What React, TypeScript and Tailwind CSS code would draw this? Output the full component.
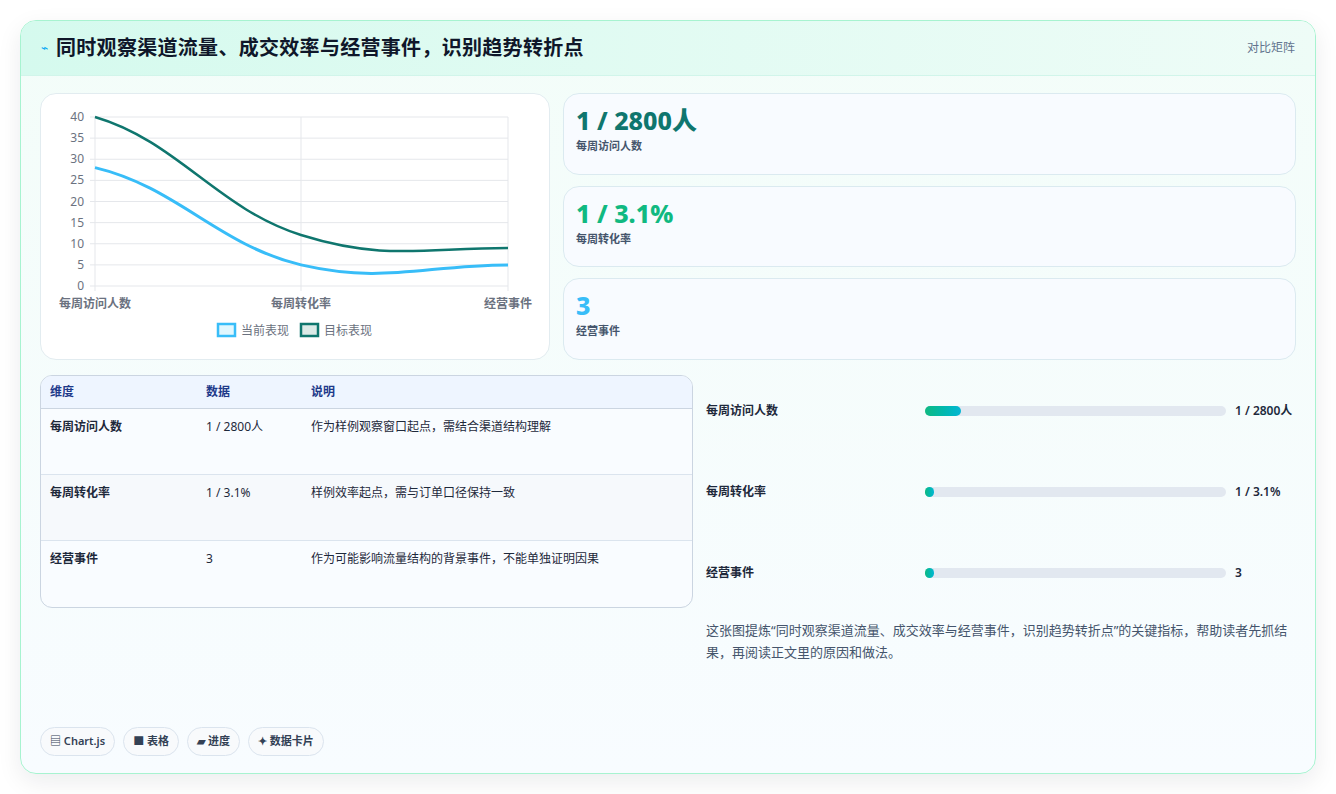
const FONT = { fontFamily: '"Noto Sans", "Noto Sans CJK SC", sans-serif' };

const stats = [
  { value: "1 / 2800人", label: "每周访问人数", color: "text-[#0f766e]" },
  { value: "1 / 3.1%", label: "每周转化率", color: "text-[#10b981]" },
  { value: "3", label: "经营事件", color: "text-[#38bdf8]" },
];

const rows = [
  { dim: "每周访问人数", data: "1 / 2800人", note: "作为样例观察窗口起点，需结合渠道结构理解" },
  { dim: "每周转化率", data: "1 / 3.1%", note: "样例效率起点，需与订单口径保持一致" },
  { dim: "经营事件", data: "3", note: "作为可能影响流量结构的背景事件，不能单独证明因果" },
];

const bars = [
  { label: "每周访问人数", value: "1 / 2800人", pct: 12 },
  { label: "每周转化率", value: "1 / 3.1%", pct: 2 },
  { label: "经营事件", value: "3", pct: 2 },
];

function Chart() {
  const ys = [0, 5, 10, 15, 20, 25, 30, 35, 40];
  return (
    <svg width="509" height="266" viewBox="41 93 509 266" className="block">
      {ys.map((v) => (
        <g key={v}>
          <line x1="90" x2="508" y1={285 - v * 4.225} y2={285 - v * 4.225} stroke="#e5e7eb" />
          <text x="84" y={289 - v * 4.225} textAnchor="end" fontSize="12" fill="#6b7280">{v}</text>
        </g>
      ))}
      {[95, 301, 508].map((x) => (
        <line key={x} x1={x} x2={x} y1="116" y2="290" stroke="#e5e7eb" />
      ))}
      <path d="M95,166.6 C177,186 218,244 301,263.9 C384,283 425,264 508,263.9" fill="none" stroke="#38bdf8" strokeWidth="3" />
      <path d="M95,116 C177,140 218,208 301,234 C384,260 425,247 508,247" fill="none" stroke="#0f766e" strokeWidth="2.5" />
      <g fontSize="12" fill="#6b7280" fontWeight="600">
        <text x="95" y="307" textAnchor="middle">每周访问人数</text>
        <text x="301" y="307" textAnchor="middle">每周转化率</text>
        <text x="508" y="307" textAnchor="middle">经营事件</text>
      </g>
      <rect x="218" y="323" width="17" height="12" fill="#e0f7fe" stroke="#38bdf8" strokeWidth="2.5" />
      <text x="241" y="334" fontSize="12" fill="#6b7280">当前表现</text>
      <rect x="301" y="323" width="17" height="12" fill="#dbeae7" stroke="#0f766e" strokeWidth="2.5" />
      <text x="324" y="334" fontSize="12" fill="#6b7280">目标表现</text>
    </svg>
  );
}

export default function App() {
  return (
    <div style={FONT} className="w-[1336px] h-[794px] bg-white pt-5 px-5">
      <div className="h-[754px] rounded-2xl border border-[#a7f3d0] bg-gradient-to-b from-[#f3fdf9] to-[#f8fcff] shadow-[0_8px_24px_rgba(15,23,42,0.08)] overflow-hidden flex flex-col">
        {/* Header */}
        <div className="h-[55px] shrink-0 flex items-center justify-between px-5 bg-gradient-to-r from-[#d5faee] to-[#eefcf7] border-b border-[#d1f5ea]">
          <div className="flex items-center gap-2">
            <span className="text-sky-500 text-xs">⌁</span>
            <h1 className="text-[20px] font-bold tracking-[0.3px] text-[#0f172a]">同时观察渠道流量、成交效率与经营事件，识别趋势转折点</h1>
          </div>
          <span className="text-xs text-slate-500">对比矩阵</span>
        </div>

        <div className="flex-1 px-[19px] pt-[17px] pb-[17px] flex flex-col">
          {/* Top row */}
          <div className="flex gap-[13px] h-[267px]">
            <div className="w-[510px] rounded-2xl border border-[#e2ecf0] bg-white overflow-hidden">
              <Chart />
            </div>
            <div className="flex-1 flex flex-col gap-[11px]">
              {stats.map((s) => (
                <div key={s.label} className="flex-1 rounded-2xl border border-[#dbeaf0] bg-[#f8fbff] px-3 pt-2">
                  <div className={`text-[25px] leading-9 font-extrabold ${s.color}`}>{s.value}</div>
                  <div className="text-[11px] text-slate-600 font-semibold">{s.label}</div>
                </div>
              ))}
            </div>
          </div>

          {/* Bottom row */}
          <div className="flex gap-[13px] mt-[15px]">
            <div className="w-[653px] h-[233px] rounded-xl border border-[#cbd5e1] bg-[#f9fcff] overflow-hidden">
              <div className="h-[33px] flex items-center bg-[#eef5ff] border-b border-[#cbd5e1] text-xs font-semibold text-[#1e3a8a]">
                <div className="w-[165px] pl-[9px]">维度</div>
                <div className="w-[105px]">数据</div>
                <div>说明</div>
              </div>
              {rows.map((r, i) => (
                <div key={r.dim} className={`h-[66px] flex pt-[10px] text-xs text-[#1e293b] ${i < 2 ? "border-b border-[#dbe4ee]" : ""} ${i === 1 ? "bg-[#f6f9fc]" : ""}`}>
                  <div className="w-[165px] pl-[9px] font-semibold">{r.dim}</div>
                  <div className="w-[105px]">{r.data}</div>
                  <div>{r.note}</div>
                </div>
              ))}
            </div>
            <div className="flex-1 flex flex-col -mt-[5px]">
              {bars.map((b) => (
                <div key={b.label} className="h-[81px] flex items-center text-xs font-semibold text-[#1e293b]">
                  <div className="w-[219px]">{b.label}</div>
                  <div className="w-[301px] h-[10px] rounded-full bg-[#e2e8f0]">
                    <div className="h-full rounded-full bg-gradient-to-r from-[#10b981] to-[#06b6d4]" style={{ width: `${Math.max(b.pct, 3)}%` }} />
                  </div>
                  <div className="pl-[9px]">{b.value}</div>
                </div>
              ))}
              <p className="mt-[6px] text-[13px] leading-[22px] text-slate-600 -mr-1">
                这张图提炼“同时观察渠道流量、成交效率与经营事件，识别趋势转折点”的关键指标，帮助读者先抓结果，再阅读正文里的原因和做法。
              </p>
            </div>
          </div>

          {/* Chips */}
          <div className="mt-auto flex gap-2">
            {["▤ Chart.js", "■ 表格", "▰ 进度", "✦ 数据卡片"].map((c) => (
              <span key={c} className="h-[29px] px-[9px] flex items-center rounded-full border border-[#dbe4ee] bg-[#f8fafc] text-[11px] font-semibold text-[#334155]">{c}</span>
            ))}
          </div>
        </div>
      </div>
    </div>
  );
}
